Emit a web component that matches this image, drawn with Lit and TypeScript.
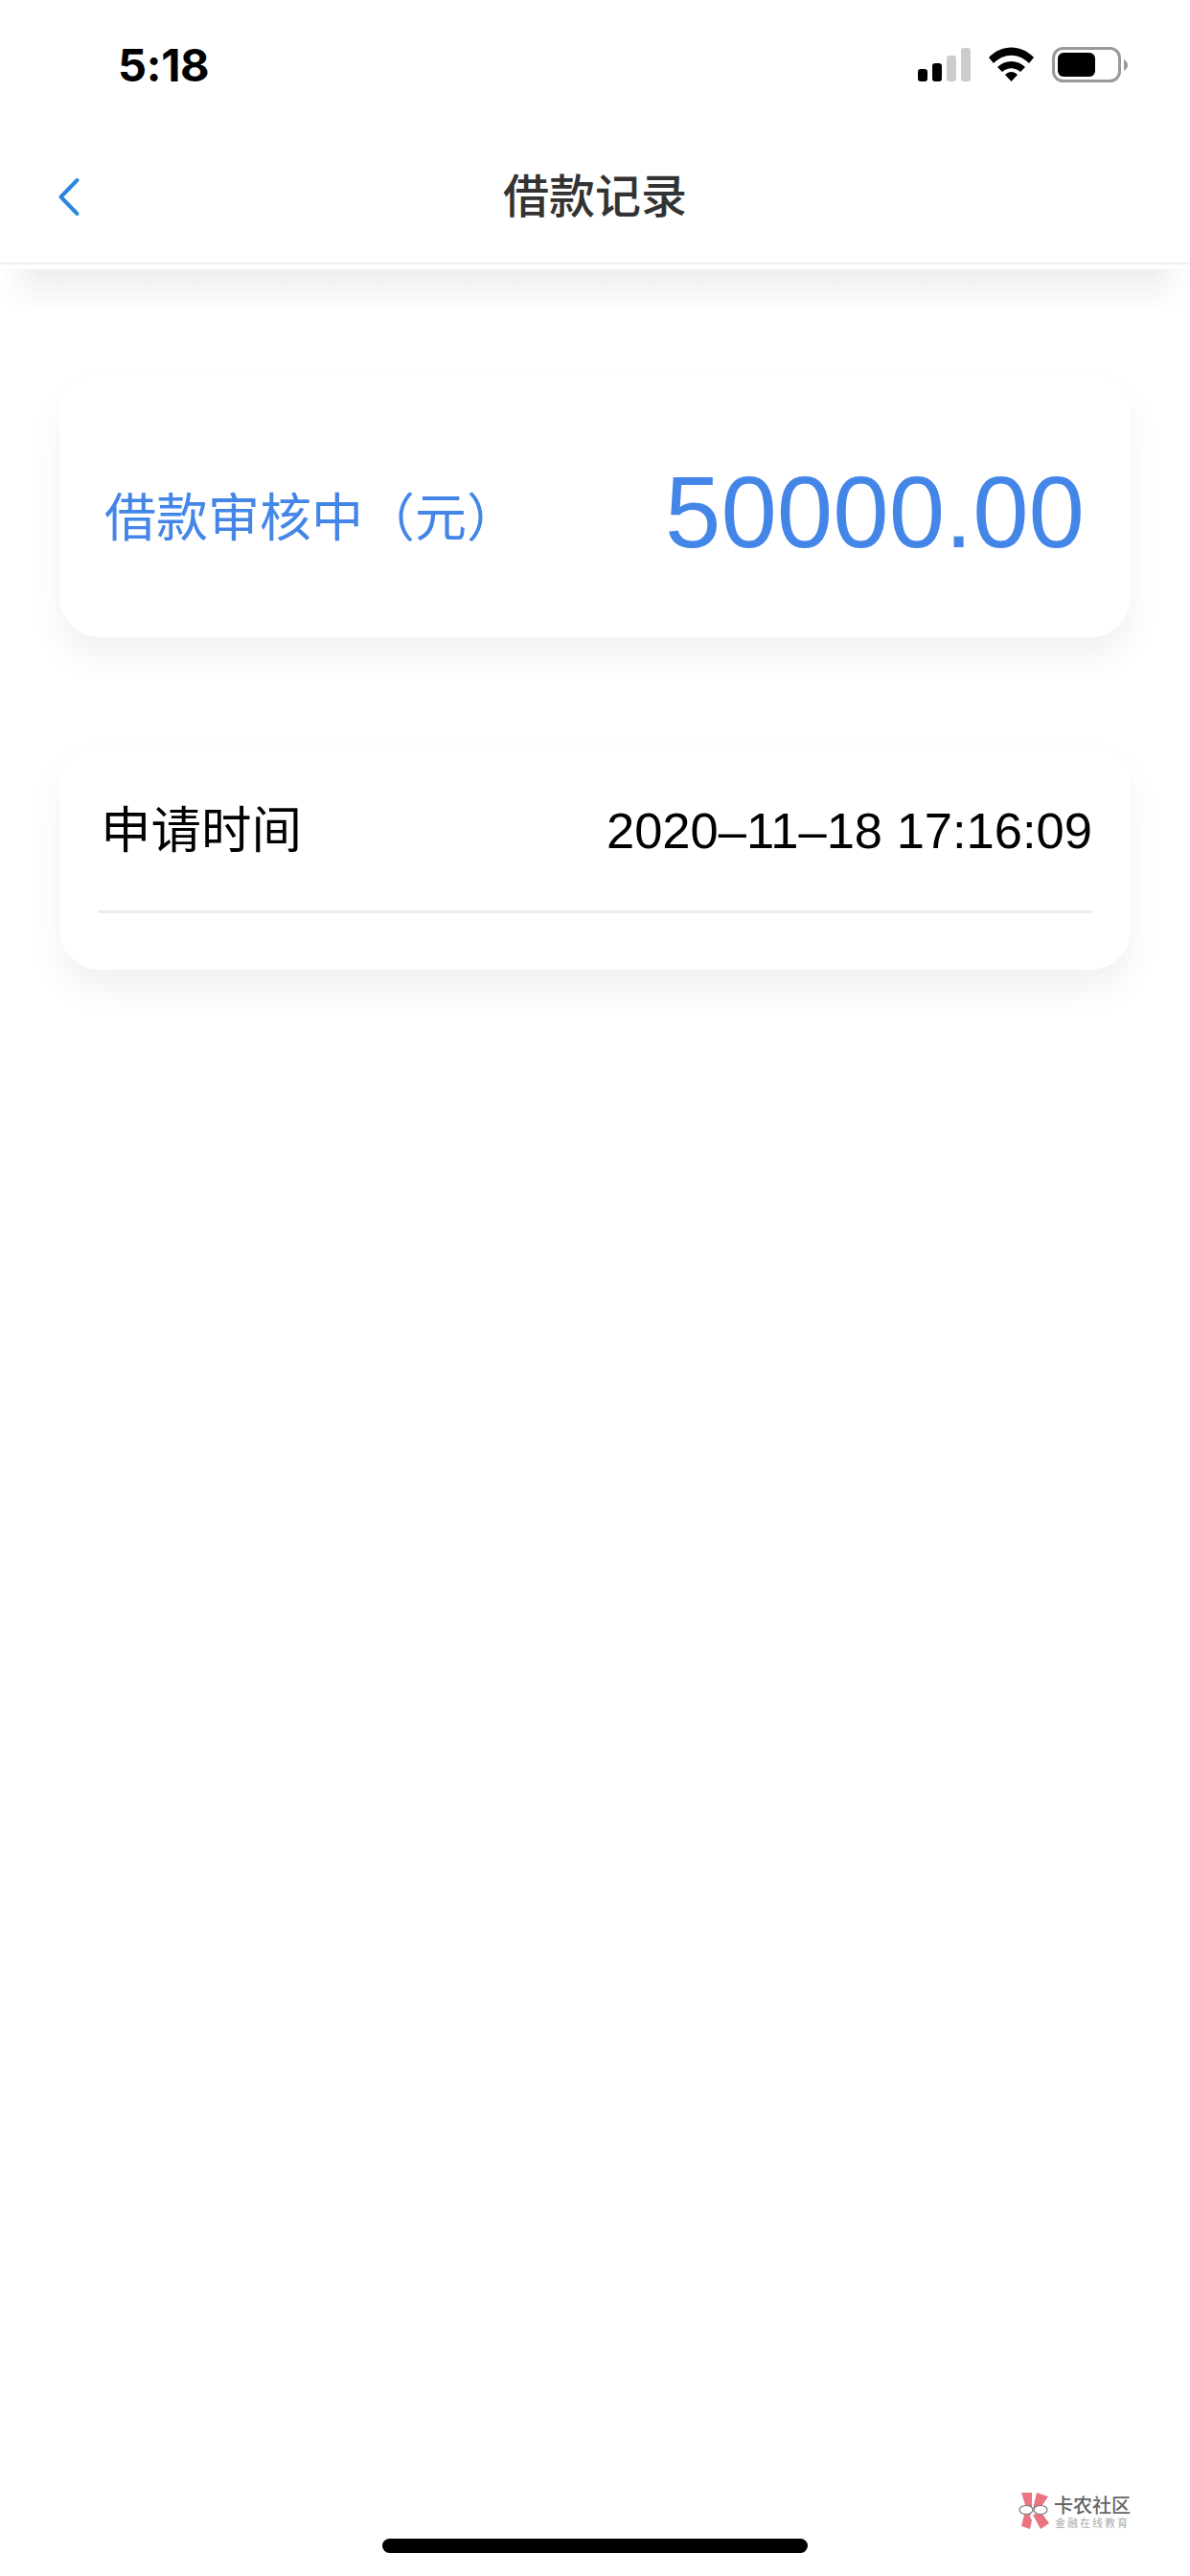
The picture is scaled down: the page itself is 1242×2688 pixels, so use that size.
import { LitElement, html, css } from "lit";
import { customElement } from "lit/decorators.js";

@customElement("app-root")
export class AppRoot extends LitElement {
  static styles = css`
    :host { display: block; width: 1242px; height: 2688px; background: #fff; font-family: "Liberation Sans", "Noto Sans CJK SC", sans-serif; position: relative; overflow: hidden; }
    .status { height: 137px; display: flex; justify-content: space-between; align-items: flex-start; padding: 44px 64px 0 123px; box-sizing: border-box; }
    .time { font-size: 47px; font-weight: 700; line-height: 48px; color: #000; font-family: Inter, "Liberation Sans", sans-serif; letter-spacing: -0.3px; }
    .icons { display: flex; align-items: flex-start; margin-top: 4px; }
    .icons svg { display: block; }
    .nav { height: 139px; display: grid; grid-template-columns: 1fr auto 1fr; align-items: center; padding-left: 60px; padding-right: 60px; border-bottom: 2px solid #efefef; box-sizing: border-box; }
    .nav svg { display: block; }
    .nav h1 { margin: 0; font-size: 48px; font-weight: 500; color: #333; line-height: 60px; }
    .shadow { height: 45px; margin-top: 5px; background: linear-gradient(#eeeeee, #fff); -webkit-mask-image: linear-gradient(90deg, transparent, #000 40px, #000 1202px, transparent); mask-image: linear-gradient(90deg, transparent, #000 40px, #000 1202px, transparent); }
    .content { padding: 64px 62px 0; display: flex; flex-direction: column; gap: 113px; }
    .card { background: #fff; border-radius: 42px; box-shadow: 0 20px 36px rgba(0,0,0,.06); box-sizing: border-box; }
    .amount { height: 275px; display: flex; justify-content: space-between; align-items: center; padding: 0 48px 0 47px; color: #4486e8; }
    .amount .label { font-size: 54px; line-height: 70px; margin-top: 27px; }
    .amount .value { font-size: 105px; line-height: 110px; margin-top: 15px; }
    .detail { height: 234px; padding: 0 40px; }
    .row { height: 175px; border-bottom: 3px solid #ececec; box-sizing: border-box; display: flex; justify-content: space-between; align-items: center; color: #000; padding: 6px 0 0 3px; }
    .row .k { font-size: 52.5px; line-height: 64px; }
    .row .v { font-size: 52.5px; line-height: 64px; }
    .home { position: absolute; left: 399px; top: 2649px; width: 444px; height: 15px; border-radius: 8px; background: #000; }
    .mark { position: absolute; left: 1062px; top: 2600px; display: flex; gap: 4px; align-items: center; }
    .mark svg { display: block; }
    .mark .t { display: flex; flex-direction: column; align-items: center; margin-top: 4px; }
    .mark .a { font-size: 20px; line-height: 23px; font-weight: 500; color: #666; }
    .mark .b { font-size: 11px; line-height: 13px; letter-spacing: 2px; color: #aaa; }
  `;

  render() {
    return html`
      <div class="status">
        <div class="time">5:18</div>
        <div class="icons">
          <svg width="220" height="40" viewBox="958 48 220 40">
            <rect x="958" y="72" width="10" height="13" rx="3" fill="#000"/>
            <rect x="973" y="66" width="10" height="19" rx="3" fill="#000"/>
            <rect x="988" y="58" width="10" height="27" rx="3" fill="#ccc"/>
            <rect x="1003" y="50" width="10" height="35" rx="3" fill="#ccc"/>
            <path d="M1032 60 C1045 46 1066 46 1079 60 L1074 66 C1063 55 1048 55 1037 66 Z" fill="#000"/>
            <path d="M1041 70 C1049 62 1062 62 1070 70 L1065 75 C1059 70 1052 70 1046 75 Z" fill="#000"/>
            <path d="M1049 78 C1053 74 1058 74 1062 78 L1055.5 85 Z" fill="#000"/>
            <rect x="1099.5" y="50.5" width="69" height="34" rx="10" fill="none" stroke="#999" stroke-width="3"/>
            <rect x="1104" y="55" width="39" height="25" rx="6" fill="#000"/>
            <path d="M1173 62 C1176 64 1177 66 1177 68 C1177 70 1176 72 1173 74 Z" fill="#999"/>
          </svg>
        </div>
      </div>
      <div class="nav">
        <svg width="30" height="48" viewBox="0 0 30 48"><path d="M20.5 6 L3.5 23.5 L20.5 41" fill="none" stroke="#2b86e0" stroke-width="4" stroke-linecap="round" stroke-linejoin="round"/></svg>
        <h1>借款记录</h1>
        <span></span>
      </div>
      <div class="shadow"></div>
      <div class="content">
        <div class="card amount"><span class="label">借款审核中（元）</span><span class="value">50000.00</span></div>
        <div class="card detail"><div class="row"><span class="k">申请时间</span><span class="v">2020–11–18 17:16:09</span></div></div>
      </div>
      <div class="mark">
        <svg width="34" height="40" viewBox="0 0 34 40">
          <path d="M4 1H15L15 16L13 26L15 30L13 39L4 36L7 24L8 14Z" fill="#ea7480"/>
          <path d="M20 1L32 5L24 17L16 18Z" fill="#ea7480"/>
          <path d="M16 24L25 22L33 33L24 39Z" fill="#ea7480"/>
          <ellipse cx="9" cy="19" rx="7" ry="4.5" fill="#fff" stroke="#777" stroke-width="1.2"/>
          <ellipse cx="24" cy="19" rx="7" ry="4.5" fill="#fff" stroke="#777" stroke-width="1.2"/>
        </svg>
        <div class="t"><span class="a">卡农社区</span><span class="b">金融在线教育</span></div>
      </div>
      <div class="home"></div>
    `;
  }
}
